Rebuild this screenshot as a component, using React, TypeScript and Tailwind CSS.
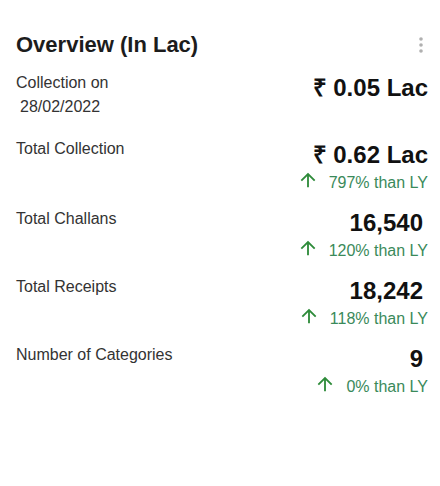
type Stat = {
  label: string;
  value: string;
  change: string;
};

const stats: Stat[] = [
  { label: "Total Collection", value: "₹ 0.62 Lac", change: "797%" },
  { label: "Total Challans", value: "16,540", change: "120%" },
  { label: "Total Receipts", value: "18,242", change: "118%" },
  { label: "Number of Categories", value: "9", change: "0%" },
];

function KebabIcon() {
  return (
    <svg width="6" height="18" viewBox="0 0 6 18" className="text-[#b0b0b0]">
      <circle cx="3" cy="3" r="1.8" fill="currentColor" />
      <circle cx="3" cy="9" r="1.8" fill="currentColor" />
      <circle cx="3" cy="15" r="1.8" fill="currentColor" />
    </svg>
  );
}

function ArrowUpward() {
  return (
    <svg width="22" height="22" viewBox="0 0 24 24" className="-mt-0.5 shrink-0 text-[#2e8b3a]">
      <path fill="currentColor" d="M4 12l1.41 1.41L11 7.83V20h2V7.83l5.58 5.59L20 12l-8-8-8 8z" />
    </svg>
  );
}

export default function App() {
  return (
    <div className="min-h-[486px] w-[440px] bg-white font-['Liberation_Sans',Arial,sans-serif] text-[#222]">
      <div className="pl-4 pr-3 pt-[29px]">
        <div className="flex items-center justify-between">
          <h2 className="text-[22px] font-bold leading-8 text-[#1c1c1c]">Overview (In Lac)</h2>
          <button className="mr-[3px] flex h-8 w-2 items-center justify-center">
            <KebabIcon />
          </button>
        </div>

        <div className="mt-[10px] flex justify-between">
          <div className="text-[16px] leading-6 text-[#333]">
            <p>Collection on</p>
            <p className="pl-1">28/02/2022</p>
          </div>
          <p className="mt-px text-[24px] font-bold leading-8 text-[#111]">₹ 0.05 Lac</p>
        </div>

        <div className="mt-[18px] flex flex-col gap-3">
          {stats.map((s) => (
            <div key={s.label} className="flex justify-between">
              <p className="text-[16px] leading-6 text-[#333]">{s.label}</p>
              <div className="flex flex-col items-end">
                <p
                  className={
                    s.value.startsWith("₹")
                      ? "mt-0.5 text-[24px] font-bold leading-8 text-[#111]"
                      : "pr-[5px] text-[24px] font-bold leading-8 text-[#111]"
                  }
                >
                  {s.value}
                </p>
                <div className="flex items-start gap-[10px] text-[16px] leading-6 text-[#3a8a5a]">
                  <ArrowUpward />
                  <span>{s.change} than LY</span>
                </div>
              </div>
            </div>
          ))}
        </div>
      </div>
    </div>
  );
}
